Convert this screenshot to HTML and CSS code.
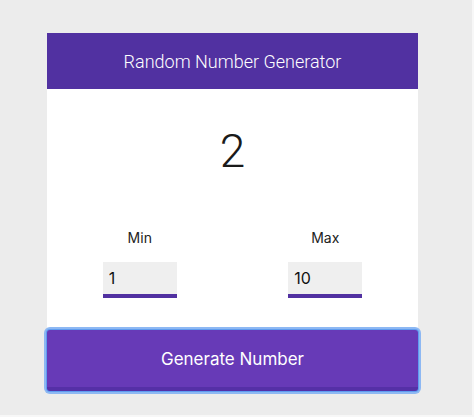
FILE: index.html
```html
<!DOCTYPE html>
<html lang="en">
<head>
<meta charset="utf-8">
<title>Random Number Generator</title>
<link rel="stylesheet" href="styles.css">
</head>
<body>
<div class="page">
  <div class="card">
    <div class="card-header">Random Number Generator</div>
    <div class="card-body">
      <div class="result">2</div>
      <div class="range">
        <label class="field">
          <span class="field-label">Min</span>
          <input class="field-input" type="text" value="1">
        </label>
        <label class="field">
          <span class="field-label">Max</span>
          <input class="field-input" type="text" value="10">
        </label>
      </div>
    </div>
    <button class="generate" type="button">Generate Number</button>
  </div>
</div>
</body>
</html>
```

FILE: styles.css
```css
html {
  background: #f7f7f7;
}
body {
  margin: 0;
}
.page {
  width: 472px;
  height: 415px;
  background: #ececec;
  padding: 33px 0 0 47px;
  box-sizing: border-box;
}
.card {
  width: 371px;
  background: #ffffff;
  display: flex;
  flex-direction: column;
}
.card-header {
  height: 56px;
  background: #5131a1;
  color: #ffffff;
  font-family: Roboto, "Liberation Sans", sans-serif;
  font-weight: 300;
  font-size: 18px;
  display: flex;
  align-items: center;
  justify-content: center;
}
.card-body {
  padding: 39px 0 32px;
  display: flex;
  flex-direction: column;
}
.result {
  font-family: Roboto, "Liberation Sans", sans-serif;
  font-weight: 300;
  font-size: 46px;
  line-height: 46px;
  height: 46px;
  text-align: center;
  color: #1a1a1a;
}
.range {
  margin-top: 57px;
  display: grid;
  grid-template-columns: 1fr 1fr;
}
.field {
  display: flex;
  flex-direction: column;
  align-items: center;
  gap: 17px;
}
.field-label {
  font-family: Inter, "Liberation Sans", sans-serif;
  font-size: 14px;
  line-height: 14px;
  color: #222222;
}
.field-input {
  width: 74px;
  height: 36px;
  box-sizing: border-box;
  margin: 0;
  border: 0;
  border-bottom: 4px solid #5131a1;
  background: #efefef;
  padding: 0 0 0 6px;
  font-family: Inter, "Liberation Sans", sans-serif;
  font-size: 16px;
  color: #111111;
  outline: none;
}
.generate {
  margin: 0;
  height: 61px;
  border: 0;
  border-bottom: 4px solid #5530a6;
  border-radius: 3px;
  background: #673ab7;
  color: #ffffff;
  font-family: Inter, "Liberation Sans", sans-serif;
  font-size: 17px;
  box-shadow: 0 0 0 1px #5f9cf0, 0 0 0 3px #8db8f3;
  cursor: pointer;
}
```
